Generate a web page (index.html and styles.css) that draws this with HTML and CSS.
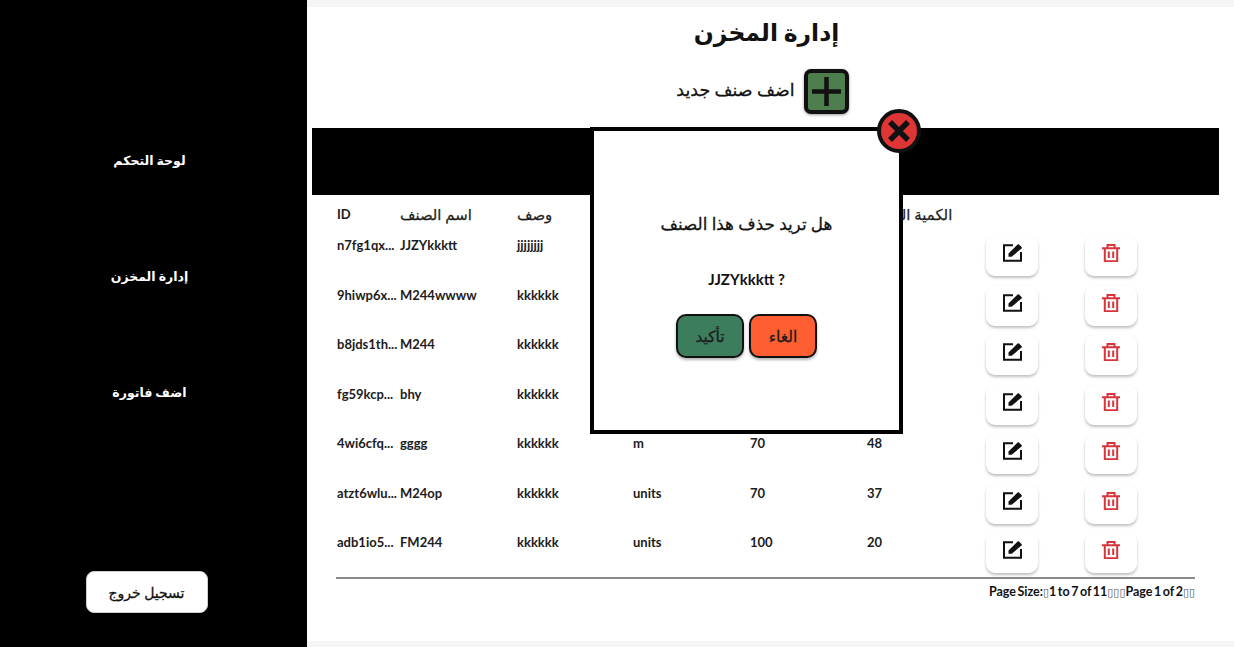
FILE: index.html
```html
<!DOCTYPE html>
<html lang="ar">
<head>
    <meta charset="UTF-8">
    <meta name="viewport" content="width=device-width, initial-scale=1.0">
    <title>إدارة المخزن</title>
    <link rel="stylesheet" href="styles.css">
</head>
<body>
    <svg class="sprites" width="0" height="0">
        <symbol id="icon-edit" viewBox="0 0 19 18">
            <path d="M10 1.200H1v15.600h17V8" fill="none" stroke="#111" stroke-width="2"/>
            <path d="M5.500 12.800V9.600L14.600 .5a1 1 0 0 1 1.400 0l2.500 2.500a1 1 0 0 1 0 1.400L8.700 12.800z" fill="#111"/>
        </symbol>
        <symbol id="icon-trash" viewBox="0 0 18 18">
            <path d="M0 4.200h18M5.500 4V1h7v3M2.800 4.200v13h12.400v-13M6.800 7.500v6.500M11.200 7.500v6.500" fill="none" stroke="#d8343c" stroke-width="2"/>
        </symbol>
    </svg>

    <aside class="sidebar">
        <nav class="side-nav">
            <a class="side-link">لوحة التحكم</a>
            <a class="side-link">إدارة المخزن</a>
            <a class="side-link">اضف فاتورة</a>
        </nav>
        <button class="logout" type="button">تسجيل خروج</button>
    </aside>

    <main class="content">
        <h1 class="page-title">إدارة المخزن</h1>
        <div class="add-row">
            <span class="add-label">اضف صنف جديد</span>
            <button class="add-btn" type="button">
                <svg width="31" height="31" viewBox="0 0 31 31"><path d="M15.500 1v29M1 15.500h29" stroke="#111" stroke-width="4.500"/></svg>
            </button>
        </div>
        <div class="banner"></div>

        <div class="table">
            <div class="row head">
                <span class="id-head">ID</span>
                <span>اسم الصنف</span>
                <span>وصف</span>
                <span></span>
                <span></span>
                <span>الكمية المتاحة</span>
            </div>
            <div class="rows">
                <div class="row">
                    <span>n7fg1qx...</span><span>JJZYkkktt</span><span>jjjjjjjj</span><span></span><span></span><span></span>
                    <button class="icon-btn" type="button"><svg width="19" height="18"><use href="#icon-edit"/></svg></button>
                    <button class="icon-btn" type="button"><svg width="18" height="18"><use href="#icon-trash"/></svg></button>
                </div>
                <div class="row">
                    <span>9hiwp6x...</span><span>M244wwww</span><span>kkkkkk</span><span></span><span></span><span></span>
                    <button class="icon-btn" type="button"><svg width="19" height="18"><use href="#icon-edit"/></svg></button>
                    <button class="icon-btn" type="button"><svg width="18" height="18"><use href="#icon-trash"/></svg></button>
                </div>
                <div class="row">
                    <span>b8jds1th...</span><span>M244</span><span>kkkkkk</span><span></span><span></span><span></span>
                    <button class="icon-btn" type="button"><svg width="19" height="18"><use href="#icon-edit"/></svg></button>
                    <button class="icon-btn" type="button"><svg width="18" height="18"><use href="#icon-trash"/></svg></button>
                </div>
                <div class="row">
                    <span>fg59kcp...</span><span>bhy</span><span>kkkkkk</span><span></span><span></span><span></span>
                    <button class="icon-btn" type="button"><svg width="19" height="18"><use href="#icon-edit"/></svg></button>
                    <button class="icon-btn" type="button"><svg width="18" height="18"><use href="#icon-trash"/></svg></button>
                </div>
                <div class="row">
                    <span>4wi6cfq...</span><span>gggg</span><span>kkkkkk</span><span>m</span><span>70</span><span>48</span>
                    <button class="icon-btn" type="button"><svg width="19" height="18"><use href="#icon-edit"/></svg></button>
                    <button class="icon-btn" type="button"><svg width="18" height="18"><use href="#icon-trash"/></svg></button>
                </div>
                <div class="row">
                    <span>atzt6wlu...</span><span>M24op</span><span>kkkkkk</span><span>units</span><span>70</span><span>37</span>
                    <button class="icon-btn" type="button"><svg width="19" height="18"><use href="#icon-edit"/></svg></button>
                    <button class="icon-btn" type="button"><svg width="18" height="18"><use href="#icon-trash"/></svg></button>
                </div>
                <div class="row">
                    <span>adb1io5...</span><span>FM244</span><span>kkkkkk</span><span>units</span><span>100</span><span>20</span>
                    <button class="icon-btn" type="button"><svg width="19" height="18"><use href="#icon-edit"/></svg></button>
                    <button class="icon-btn" type="button"><svg width="18" height="18"><use href="#icon-trash"/></svg></button>
                </div>
            </div>
            <div class="pager">Page Size:<i>▯</i>1 to 7 of 11<i>▯▯▯</i>Page 1 of 2<i>▯▯</i></div>
        </div>
    </main>

    <div class="modal">
        <button class="modal-close" type="button">
            <svg width="36" height="36" viewBox="0 0 36 36"><path d="M9 9l18 18M27 9L9 27" stroke="#111" stroke-width="5.500"/></svg>
        </button>
        <p class="modal-text">هل تريد حذف هذا الصنف</p>
        <p class="modal-name">JJZYkkktt ?</p>
        <div class="modal-actions">
            <button class="confirm" type="button">تأكيد</button>
            <button class="cancel" type="button">الغاء</button>
        </div>
    </div>
</body>
</html>
```

FILE: styles.css
```css
* {
    box-sizing: border-box;
}

body {
    margin: 0;
    height: 647px;
    overflow: hidden;
    display: flex;
    background-color: #f5f5f5;
    font-family: Lato, "Noto Sans", "DejaVu Sans", sans-serif;
    color: #111;
}

.sprites {
    position: absolute;
}

.sidebar {
    width: 307px;
    flex-shrink: 0;
    background-color: #000;
    padding-top: 103px;
    display: flex;
    flex-direction: column;
    align-items: center;
}

.side-nav {
    display: flex;
    flex-direction: column;
    padding-right: 8px;
    height: 468px;
}

.side-link {
    height: 116px;
    line-height: 116px;
    text-align: center;
    color: #fff;
    font-size: 12.500px;
    font-weight: 700;
}

.logout {
    width: 122px;
    height: 42px;
    border: 1px solid #ccc;
    border-radius: 8px;
    background-color: #fff;
    color: #111;
    font: inherit;
    font-size: 14px;
    -webkit-text-stroke: 0.3px #111;
    margin-right: 14px;
}

.content {
    flex: 1;
    margin: 7px 0 6px;
    background-color: #fff;
    min-width: 0;
}

.page-title {
    margin: 0;
    height: 62px;
    padding-right: 8px;
    line-height: 50px;
    text-align: center;
    font-size: 23.500px;
    font-weight: 700;
}

.add-row {
    display: flex;
    justify-content: center;
    align-items: center;
    gap: 9px;
    padding-right: 16px;
}

.add-label {
    font-size: 17.400px;
    -webkit-text-stroke: 0.3px #111;
    line-height: 24px;
    padding-bottom: 4px;
}

.add-btn {
    width: 45px;
    height: 45px;
    padding: 0;
    display: flex;
    align-items: center;
    justify-content: center;
    background-color: #4e7e4e;
    border: 4px solid #111;
    border-radius: 7px;
    box-shadow: 0 1px 3px rgba(0, 0, 0, 0.4);
}

.banner {
    height: 67px;
    margin: 14px 15px 0 5px;
    background-color: #000;
}

.table {
    padding-left: 29px;
    width: 888px;
}

.row {
    display: grid;
    grid-template-columns: 63px 117px 116px 117px 117px 119px 99px 52px;
    font-size: 13px;
    font-weight: 700;
    line-height: 18px;
    height: 40px;
    padding-left: 1px;
    white-space: nowrap;
}

.row span {
    color: #1c1c1c;
}

.head {
    height: 41px;
    padding-top: 10px;
    font-size: 14.900px;
    font-weight: 400;
    -webkit-text-stroke: 0.25px #1c1c1c;
}

.head .id-head {
    font-size: 13px;
    font-weight: 700;
    -webkit-text-stroke: 0;
}

.rows {
    display: flex;
    flex-direction: column;
    gap: 9.500px;
    margin-bottom: 4px;
}

.icon-btn {
    width: 52px;
    height: 40px;
    padding: 0 0 6px;
    display: flex;
    align-items: center;
    justify-content: center;
    background-color: #fff;
    border: 0;
    border-radius: 9px;
    box-shadow: 0 2px 3px rgba(0, 0, 0, 0.25);
}

.pager {
    border-top: 2px solid #8a8a8a;
    padding-top: 4px;
    text-align: right;
    font-size: 12.500px;
    font-weight: 700;
    line-height: 18px;
    word-spacing: -1.500px;
    white-space: nowrap;
}

.pager i {
    font-style: normal;
    font-weight: 400;
    color: #555;
    font-size: 11px;
    font-family: "DejaVu Sans", sans-serif;
}

/* sits on top of the table */
.modal {
    position: absolute;
    left: 590px;
    top: 127px;
    width: 313px;
    height: 307px;
    background-color: #fff;
    border: 4px solid #000;
    padding-top: 81px;
    display: flex;
    flex-direction: column;
    align-items: center;
}

.modal-text,
.modal-name {
    margin: 0;
    line-height: 24px;
}

.modal-text {
    font-size: 16.800px;
    -webkit-text-stroke: 0.3px #111;
}

.modal-name {
    margin-top: 31px;
    font-size: 15px;
    font-weight: 700;
}

.modal-actions {
    display: flex;
    gap: 5px;
    margin-top: 23px;
}

.confirm,
.cancel {
    width: 68px;
    height: 44px;
    border: 2px solid #111;
    border-radius: 10px;
    font: inherit;
    font-size: 15.500px;
    -webkit-text-stroke: 0.3px #1c1c1c;
    color: #1c1c1c;
    box-shadow: 0 2px 3px rgba(0, 0, 0, 0.3);
}

.confirm {
    background-color: #3b7d5c;
}

.cancel {
    background-color: #ff5e30;
}

.modal-close {
    position: absolute;
    right: -22px;
    top: -22px;
    width: 44px;
    height: 44px;
    padding: 0;
    display: flex;
    align-items: center;
    justify-content: center;
    border: 4px solid #111;
    border-radius: 50%;
    background-color: #e03535;
}
```
